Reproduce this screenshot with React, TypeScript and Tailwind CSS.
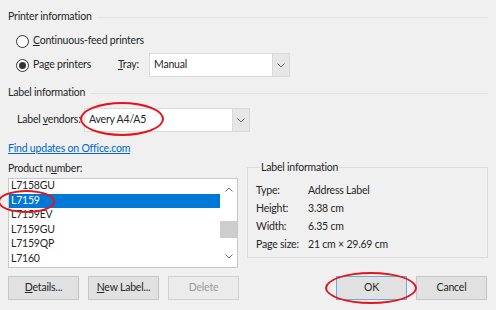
import React from "react";

const Chevron = ({ up = false }: { up?: boolean }) => (
  <svg width="8" height="5" viewBox="0 0 8 5" className={up ? "rotate-180" : ""}>
    <path d="M0.5 0.5 L4 4 L7.5 0.5" fill="none" stroke="#6d6d6d" strokeWidth="1" />
  </svg>
);

const Radio = ({ checked }: { checked?: boolean }) => (
  <span className="w-[13px] h-[13px] rounded-full border border-[#333] bg-white flex items-center justify-center">
    {checked && <span className="w-[7px] h-[7px] rounded-full bg-[#333]" />}
  </span>
);

const Heading = ({ children }: { children: React.ReactNode }) => (
  <div className="flex items-center h-4 gap-[5px] pr-[8px]">
    <span>{children}</span>
    <span className="flex-1 h-px bg-[#e2e2e2]" />
  </div>
);

const Combo = ({ value, width }: { value: string; width: string }) => (
  <div className={`flex h-6 border border-[#d9d9d9] bg-white ${width}`}>
    <div className="flex-1 flex items-center pl-[4px]">{value}</div>
    <div className="w-[17px] bg-[#e6e6e6] border-l border-[#d9d9d9] flex items-center justify-center">
      <Chevron />
    </div>
  </div>
);

const items = ["L7158GU", "L7159", "L7159EV", "L7159GU", "L7159QP", "L7160"];

const info = [
  ["Type:", "Address Label"],
  ["Height:", "3.38 cm"],
  ["Width:", "6.35 cm"],
  ["Page size:", "21 cm \u00d7 29.69 cm"],
];

const Btn = ({ children, className = "" }: { children: React.ReactNode; className?: string }) => (
  <div className={`w-[71px] h-6 flex items-center justify-center border ${className}`}>{children}</div>
);

export default function App() {
  return (
    <div
      className="relative w-[496px] h-[310px] bg-[#f0f0f0] text-[#262626] text-[10.5px] tracking-[-0.2px] whitespace-nowrap overflow-hidden"
      style={{ fontFamily: 'Lato, "Noto Sans", sans-serif' }}
    >
      <div className="pt-[9px] pl-2 flex flex-col">
        <Heading>Printer information</Heading>

        <div className="mt-2 h-4 flex items-center gap-[4px] pl-[8px]">
          <Radio />
          <span>
            <u>C</u>ontinuous-feed printers
          </span>
        </div>

        <div className="mt-1 h-6 flex items-center pl-[8px]">
          <Radio checked />
          <span className="ml-[4px] w-[85px]">
            Pa<u>g</u>e printers
          </span>
          <span className="w-[31px]">
            <u>T</u>ray:
          </span>
          <Combo value="Manual" width="w-[141px]" />
        </div>

        <div className="mt-[8px]">
          <Heading>Label information</Heading>
        </div>

        <div className="mt-[7px] h-6 flex items-center pl-[9px]">
          <span className="w-[67px]">
            Label <u>v</u>endors:
          </span>
          <Combo value="Avery A4/A5" width="w-[166px]" />
        </div>

        <div className="mt-[9px] h-4 flex items-center">
          <span className="text-[#0066cc] underline">Find updates on Office.com</span>
        </div>

        <div className="mt-[4px] flex gap-[9px]">
          <div className="flex flex-col w-[230px]">
            <div className="h-4 flex items-center">
              Product n<u>u</u>mber:
            </div>
            <div className="mt-[1px] h-[90px] border border-[#c8c8c8] bg-white flex">
              <div className="flex-1 flex flex-col">
                {items.map((it, i) => (
                  <div
                    key={it}
                    className={`h-[14.5px] flex items-center pl-[2px] ${
                      i === 1 ? "bg-[#0078d7] text-white" : ""
                    }`}
                  >
                    {it}
                  </div>
                ))}
              </div>
              <div className="w-[17px] flex flex-col items-center justify-between py-[8px]">
                <Chevron up />
                <div className="flex-1 w-full flex items-center">
                  <div className="w-full h-[17px] bg-[#cdcdcd] mt-[12px]" />
                </div>
                <Chevron />
              </div>
            </div>
          </div>

          <fieldset className="w-[241px] h-[98px] border border-[#dcdcdc] -mt-[1px] pl-[8px]">
            <legend className="px-[1px] ml-[4px]">Label information</legend>
            <div className="flex flex-col mt-[6px]">
              {info.map(([k, v]) => (
                <div key={k} className="h-[18px] flex items-center">
                  <span className="w-[52px]">{k}</span>
                  <span>{v}</span>
                </div>
              ))}
            </div>
          </fieldset>
        </div>

        <div className="mt-[8px] flex">
          <Btn className="bg-[#e1e1e1] border-[#c6c6c6]">
            <span>
              <u>D</u>etails...
            </span>
          </Btn>
          <Btn className="ml-[9px] bg-[#e1e1e1] border-[#c6c6c6]">
            <span>
              <u>N</u>ew Label...
            </span>
          </Btn>
          <Btn className="ml-[9px] bg-[#ebebeb] border-[#d0d0d0] text-[#9a9a9a]">Delete</Btn>
          <Btn className="ml-[97px] bg-[#e1e1e1] border-[#6aa9e2]">OK</Btn>
          <Btn className="ml-[9px] bg-[#e1e1e1] border-[#c6c6c6]">Cancel</Btn>
        </div>
      </div>

      <div className="absolute left-[80px] top-[102px] w-[84px] h-[34px] rounded-[50%] border-2 border-[#e3141b]" />
      <div className="absolute left-[-2px] top-[190px] w-[57px] h-[23px] rounded-[50%] border-2 border-[#e3141b]" />
      <div className="absolute left-[325px] top-[272px] w-[92px] h-[32px] rounded-[50%] border-2 border-[#e3141b]" />
    </div>
  );
}
